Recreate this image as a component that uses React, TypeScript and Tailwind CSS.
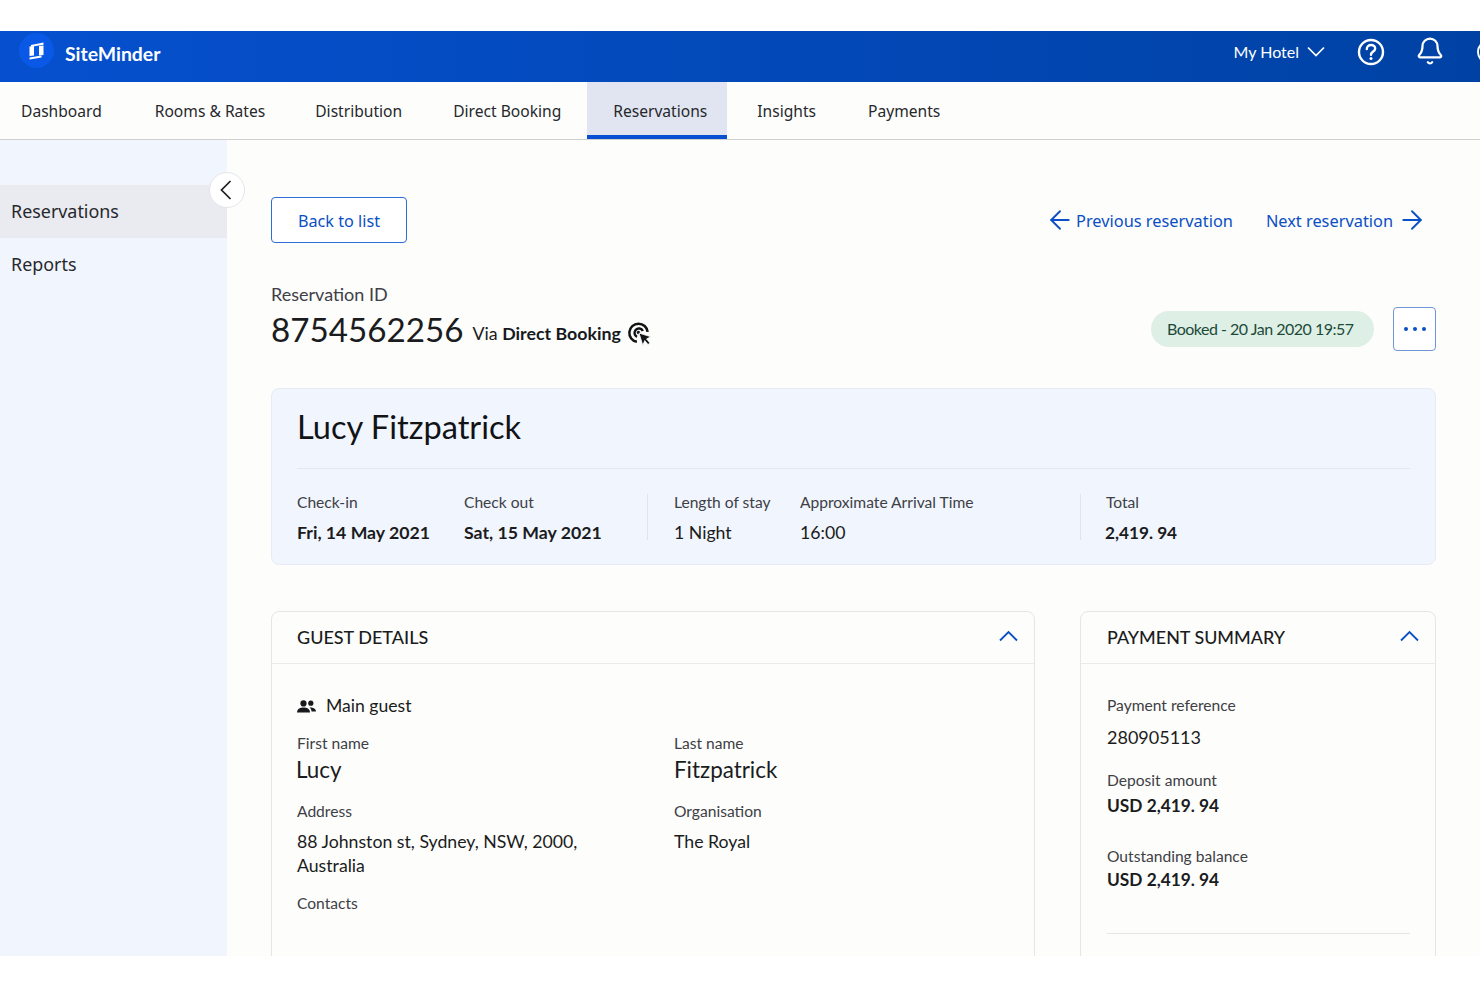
import React from "react";
import { ArrowLeft, ArrowRight, Bell } from "lucide-react";

const Nav = ["Dashboard", "Rooms & Rates", "Distribution", "Direct Booking", "Reservations", "Insights", "Payments"];
const navP = ["pl-[21px] pr-[27px]", "pl-[26px] pr-[24px]", "pl-[26px] pr-[25px]", "px-[26px]", "pl-[26px] pr-[20px]", "pl-[30px] pr-[26px]", "px-[26px]"];

function Logo() {
  return (
    <div className="w-[35px] h-[35px] rounded-full bg-[#0a58e6] flex items-center justify-center">
      <svg width="15" height="18" viewBox="0 0 15 18" fill="white">
        <path d="M0.5 4.6 L5 4 V13.4 L0.5 14 Z" />
        <path d="M2 3 L14.5 0.6 V2.8 L2 4.8 Z" />
        <path d="M10 4 L14.5 3.4 V13 L10 13.6 Z" />
        <path d="M0.5 15.6 L12.5 13.6 V15.6 L0.5 17.6 Z" />
      </svg>
    </div>
  );
}

function Help() {
  return (
    <svg width="28" height="28" viewBox="0 0 28 28" fill="none" stroke="white" strokeWidth="2.4">
      <circle cx="14" cy="14" r="12" />
      <path d="M9.8 11c0-2.6 1.9-4 4.2-4s4.2 1.5 4.2 3.6c0 3-4.2 3-4.2 6.2" strokeLinecap="round" />
      <circle cx="14" cy="20.6" r="1.5" fill="white" stroke="none" />
    </svg>
  );
}

function Chevron({ d, w, h, color, sw = 1.8 }: { d: string; w: number; h: number; color: string; sw?: number }) {
  return (
    <svg width={w} height={h} viewBox={`0 0 ${w} ${h}`} fill="none" stroke={color} strokeWidth={sw}>
      <path d={d} />
    </svg>
  );
}

function Target() {
  return (
    <svg width="25" height="25" viewBox="0 0 24 24" fill="none" stroke="#111315" strokeWidth="2.4">
      <path d="M9.5 20 A8.8 8.8 0 1 1 19.8 10.5" />
      <path d="M9.6 15.2 A4.2 4.2 0 1 1 15.2 9.6" />
      <circle cx="11" cy="11" r="1.6" fill="#111315" stroke="none" />
      <path d="M11.5 11.5 L23 15.2 L18.8 17.2 L22 21 L20.2 22.6 L17 18.8 L15.2 23.5 Z" fill="#111315" stroke="#fdfdfc" strokeWidth="0.8" />
    </svg>
  );
}

function People() {
  return (
    <svg width="19" height="13" viewBox="0 0 19 13" fill="#17191c">
      <circle cx="6.5" cy="3.4" r="3.1" />
      <circle cx="13.8" cy="3.2" r="2.6" />
      <path d="M0 12.5 C0 8.8 3.5 7.6 6.5 7.6 S13 8.8 13 12.5 Z" />
      <path d="M12.5 7.5 C15.5 7.2 19 8.6 19 11.5 H14.5 C14.5 9.8 13.8 8.6 12.5 7.5 Z" />
    </svg>
  );
}

function Label({ children, className = "" }: { children: React.ReactNode; className?: string }) {
  return <div className={`text-[15.6px] leading-5 text-[#3d4045] ${className}`}>{children}</div>;
}

function Stat({ label, value, w, bold = false, valueClass = "text-[17.7px]" }: { label: string; value: string; w: string; bold?: boolean; valueClass?: string }) {
  return (
    <div className={w}>
      <div className="text-[15.6px] leading-5 text-[#3d4045]">{label}</div>
      <div className={`mt-[9px] leading-6 text-[#1a1c20] ${valueClass} ${bold ? "font-bold" : ""}`}>{value}</div>
    </div>
  );
}

export default function App() {
  return (
    <div className="w-[1480px] h-[987px] overflow-hidden bg-white font-['Lato',sans-serif] text-[#1a1c20]">
      <div className="h-[31px]" />
      <header className="h-[51px] overflow-hidden bg-gradient-to-r from-[#0650cf] to-[#0042a4] flex items-center pl-[19px]">
        <div className="-translate-y-[6px]"><Logo /></div>
        <span className="ml-[11px] text-[19.4px] font-bold text-white leading-6 -translate-y-[3px]">SiteMinder</span>
        <div className="ml-auto flex items-center -translate-y-[5px]">
          <span className="text-[16px] text-white leading-6">My Hotel</span>
          <span className="ml-[8px] flex">
            <Chevron d="M1 1.5 L9 9.5 L17 1.5" w={18} h={11} color="white" sw={1.7} />
          </span>
          <div className="ml-[32px] flex"><Help /></div>
          <Bell className="ml-[30px] -translate-y-[1px]" color="white" size={30} strokeWidth={1.8} />
          <div className="ml-[32px] -mr-[21px] w-[24px] h-[24px] rounded-full border-2 border-white shrink-0" />
        </div>
      </header>

      <nav className="h-[58px] flex items-stretch border-b border-[#d0d0d0] bg-[#fdfdfc] font-['Noto_Sans',sans-serif] text-[15.6px] text-[#26282c]">
        {Nav.map((n, i) => (
          <div
            key={n}
            className={`${navP[i]} pt-[2px] flex items-center ${n === "Reservations" ? "bg-[#e1e5f2] border-b-[4px] border-t-[4px] border-b-[#0750d4] border-t-transparent" : ""}`}
          >
            {n}
          </div>
        ))}
      </nav>

      <div className="relative h-[816px] overflow-hidden flex bg-[#fdfdfc]">
        <aside className="w-[227px] shrink-0 bg-[#f1f5fe] pt-[45px] font-['Noto_Sans',sans-serif] text-[17.9px] text-[#26282c]">
          <div className="h-[53px] bg-[#e9ebf1] flex items-center pl-[11px]">Reservations</div>
          <div className="h-[53px] flex items-center pl-[11px]">Reports</div>
        </aside>
        <div className="absolute left-[209px] top-[32px] w-[36px] h-[36px] rounded-full bg-white border border-[#e3e5ea] flex items-center justify-center">
          <span className="flex -ml-[2px]">
            <Chevron d="M10.5 1 L1.5 10 L10.5 19" w={12} h={20} color="#1a1c20" sw={1.7} />
          </span>
        </div>

        <main className="flex-1 pl-[44px] pr-[44px] pt-[57px]">
          <div className="flex items-center justify-between pr-[9px]">
            <button className="w-[136px] h-[46px] pt-[2px] rounded-[4px] border border-[#2a6fd6] text-[#0b4fc4] text-[16.2px] bg-white font-['Noto_Sans',sans-serif]">
              Back to list
            </button>
            <div className="flex items-center text-[#0b4fc4] text-[16.35px] font-['Noto_Sans',sans-serif]">
              <ArrowLeft size={30} strokeWidth={1.5} />
              <span className="ml-[1px] pt-[2px]">Previous reservation</span>
              <span className="ml-[33px] pt-[2px]">Next reservation</span>
              <ArrowRight size={30} strokeWidth={1.5} className="ml-[4px]" />
            </div>
          </div>

          <div className="mt-[39px] text-[18px] leading-6 text-[#3d4045]">Reservation ID</div>
          <div className="flex items-center justify-between -mt-[2px] -translate-y-[3px]">
            <div className="flex items-center pt-[6px]">
              <span className="text-[33.2px] leading-[44px]">8754562256</span>
              <span className="ml-[9px] mt-[9px] text-[17.8px]">Via <span className="font-bold text-[#17191c]">Direct Booking</span></span>
              <span className="ml-[6px] mt-[9px] flex"><Target /></span>
            </div>
            <div className="flex items-center">
              <div className="w-[223px] h-[36px] mt-[5px] pl-[16px] rounded-full bg-[#deefe6] text-[#1c4a38] text-[16px] tracking-[-0.5px] flex items-center">
                Booked - 20 Jan 2020 19:57
              </div>
              <div className="ml-[19px] w-[43px] h-[44px] mt-[5px] rounded-[4px] border border-[#6f97d8] bg-white flex items-center justify-center gap-[5px]">
                <span className="w-[4px] h-[4px] rounded-full bg-[#0b4fc4]" />
                <span className="w-[4px] h-[4px] rounded-full bg-[#0b4fc4]" />
                <span className="w-[4px] h-[4px] rounded-full bg-[#0b4fc4]" />
              </div>
            </div>
          </div>

          <section className="mt-[34px] h-[177px] rounded-[8px] border border-[#e7ebf4] bg-[#f1f5fe] px-[25px]">
            <h1 className="pt-[18px] h-[80px] text-[32.6px] leading-10 text-[#111315] border-b border-[#e4e7ee]">Lucy Fitzpatrick</h1>
            <div className="flex pt-[23px]">
              <Stat label="Check-in" value="Fri, 14 May 2021" w="w-[167px]" bold />
              <Stat label="Check out" value="Sat, 15 May 2021" w="w-[183px]" bold />
              <div className="w-px h-[46px] bg-[#e1e4ea] mr-[26px] mt-[2px]" />
              <Stat label="Length of stay" value="1 Night" w="w-[126px]" />
              <Stat label="Approximate Arrival Time" value="16:00" w="w-[280px]" />
              <div className="w-px h-[46px] bg-[#e1e4ea] mr-[25px] mt-[2px]" />
              <Stat label="Total" value="2,419. 94" w="w-[120px]" bold valueClass="text-[17.2px] -ml-px" />
            </div>
          </section>

          <div className="mt-[46px] flex gap-[45px] items-start">
            <section className="w-[764px] h-[400px] rounded-t-[8px] border border-[#e5e6e9] bg-[#fdfdfc]">
              <div className="h-[52px] flex items-center justify-between pl-[25px] pr-[16px] border-b border-[#ebebee]">
                <span className="text-[18px] font-medium text-[#1a1c20]">GUEST DETAILS</span>
                <span className="flex -translate-y-[2px]"><Chevron d="M1 10.5 L9.5 2 L18 10.5" w={19} h={12} color="#0b4fc4" /></span>
              </div>
              <div className="pl-[25px] pt-[30px]">
                <div className="flex items-center h-6 text-[17.6px]">
                  <People />
                  <span className="ml-[10px]">Main guest</span>
                </div>
                <div className="mt-[15px] grid grid-cols-[377px_1fr]">
                  <div>
                    <Label>First name</Label>
                    <div className="text-[22.4px] leading-7 -ml-px mt-[3px]">Lucy</div>
                    <Label className="mt-[17px]">Address</Label>
                    <div className="mt-[9px] text-[17.7px] leading-[24px] w-[300px]">88 Johnston st, Sydney, NSW, 2000, Australia</div>
                    <Label className="mt-[15px]">Contacts</Label>
                  </div>
                  <div>
                    <Label>Last name</Label>
                    <div className="text-[22.4px] leading-7 mt-[3px]">Fitzpatrick</div>
                    <Label className="mt-[17px]">Organisation</Label>
                    <div className="mt-[9px] text-[17.7px] leading-[24px]">The Royal</div>
                  </div>
                </div>
              </div>
            </section>

            <section className="flex-1 h-[400px] rounded-t-[8px] border border-[#e5e6e9] bg-[#fdfdfc]">
              <div className="h-[52px] flex items-center justify-between pl-[26px] pr-[16px] border-b border-[#ebebee]">
                <span className="text-[17.9px] font-medium text-[#1a1c20]">PAYMENT SUMMARY</span>
                <span className="flex -translate-y-[2px]"><Chevron d="M1 10.5 L9.5 2 L18 10.5" w={19} h={12} color="#0b4fc4" /></span>
              </div>
              <div className="pl-[26px] pr-[25px] pt-[31px]">
                <Label>Payment reference</Label>
                <div className="mt-[10px] text-[18px] leading-6">280905113</div>
                <Label className="mt-[21px]">Deposit amount</Label>
                <div className="mt-[4px] text-[17.3px] leading-6 font-bold">USD 2,419. 94</div>
                <Label className="mt-[28px]">Outstanding balance</Label>
                <div className="mt-[2px] text-[17.3px] leading-6 font-bold">USD 2,419. 94</div>
                <div className="mt-[41px] border-t border-[#e5e6e9]" />
              </div>
            </section>
          </div>
        </main>
      </div>
    </div>
  );
}
